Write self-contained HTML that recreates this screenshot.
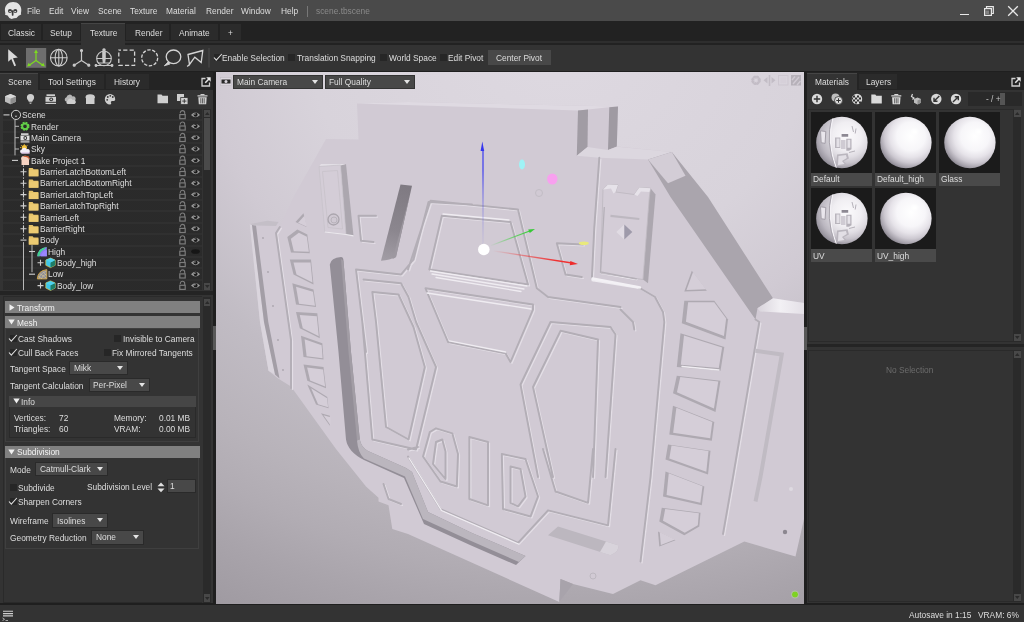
<!DOCTYPE html>
<html><head><meta charset="utf-8"><title>scene.tbscene</title>
<style>
html,body{margin:0;padding:0}
body{width:1024px;height:622px;position:relative;overflow:hidden;background:#1f1f1f;font-family:"Liberation Sans",sans-serif;font-size:9.5px;color:#dedede;line-height:12px}
.a{position:absolute}
.t{position:absolute;white-space:nowrap;transform-origin:0 50%;transform:scaleX(.88);height:12px}
#title{left:0;top:0;width:1024px;height:21px;background:#4a4a4a}
#tabs{left:0;top:21px;width:1024px;height:24px;background:#222}
.tab{position:absolute;top:3px;height:16px;background:#2b2b2b}
.tab.on{background:#333;top:2px;height:22px;border-top:1px solid #454545;box-sizing:border-box}
#toolbar{left:0;top:45px;width:1024px;height:26px;background:#333}
#left{left:0;top:72px;width:213px;height:531px;background:#333}
#view{left:216px;top:72px;width:588px;height:532px;background:#cfc8d2;overflow:hidden}
#right{left:807px;top:72px;width:217px;height:531px;background:#333}
#status{left:0;top:605px;width:1024px;height:17px;background:#333}
.cb{position:absolute;width:7px;height:7px;background:#262626}
.dd{position:absolute;background:#484848;height:12px;box-shadow:0 0 0 1px #2a2a2a}
.dd:after{content:"";position:absolute;right:4px;top:4px;border-left:3px solid transparent;border-right:3px solid transparent;border-top:4.5px solid #e4e4e4}
.hdr{position:absolute;left:5px;width:195px;height:11.5px;background:#808080}
.ptab{position:absolute;top:2px;height:14.5px;background:#2b2b2b}
.ptab.on{background:#333;top:1px;height:17px;border-top:1px solid #454545;box-sizing:border-box}
</style></head><body>
<svg width="0" height="0" style="position:absolute"><defs>
<radialGradient id="gS" cx=".6" cy=".38" r=".66"><stop offset="0" stop-color="#fff"/><stop offset=".42" stop-color="#f7f6f9"/><stop offset=".62" stop-color="#e6e3e9"/><stop offset=".78" stop-color="#cdc9d1"/><stop offset=".9" stop-color="#aba7b0"/><stop offset="1" stop-color="#8a8690"/></radialGradient>
<radialGradient id="gT" cx=".6" cy=".38" r=".66"><stop offset="0" stop-color="#fbfafc"/><stop offset=".42" stop-color="#f0eef2"/><stop offset=".62" stop-color="#dfdce2"/><stop offset=".78" stop-color="#c8c4cc"/><stop offset=".9" stop-color="#a9a5ae"/><stop offset="1" stop-color="#8a8690"/></radialGradient>
<filter id="bl"><feGaussianBlur stdDeviation="1.200"/></filter>
<clipPath id="sphc"><circle cx="30.900" cy="30.500" r="25.700"/></clipPath>
<g id="texd" clip-path="url(#sphc)"><path d="M22.100 4Q15 30 25.400 57L0 57V4Z" fill="#9a96a0" opacity=".28"/><path d="M22.100 5Q15.500 30 25.400 56" fill="none" stroke="#f4f2f6" stroke-width="1.300"/><path d="M20.800 5Q14.200 30 24.100 56" fill="none" stroke="#a9a5ae" stroke-width="1"/>
<path d="M9.500 18.800l5.300.7-.7 11.900-3.900-.7z" fill="#e9e6ec" stroke="#a29ea7" stroke-width="1"/>
<path d="M24 25.400h5.300v10.600H24z" fill="#b9b5bd"/><path d="M25.500 26.500h3v8.500h-3z" fill="#e4e1e7"/>
<path d="M30.600 22.100h6.600v2.700h-6.600z" fill="#8d8993"/>
<path d="M35.300 26.700h5.200v10.600l-2.500 1.500h-2.700z" fill="#b4b0b8"/><path d="M36.500 27.800h2.800v8h-2.800z" fill="#e6e3e9"/>
<path d="M30 28h4.500v9H30z" fill="#cfcbd3"/>
<path d="M26 42.600L36.600 41.200 37.900 46.500 32.600 49.200 36.600 53.100 25.400 54.400Z" fill="#bab6be"/><path d="M27.500 44L35 43 35.800 46 31 49 33.500 52 27 53Z" fill="#e2dfe5"/>
<path d="M41 14l1.500 6M45 16.500l-.8 5M38 40.500l6-1.500" stroke="#b5b1b9" stroke-width="1" fill="none"/>
</g>
</defs></svg>
<!--TITLE-->
<div id="title" class="a">
<svg class="a" style="left:0;top:0" width="24" height="21" viewBox="0 0 24 21"><path d="M13.100 2C8.300 2 4.900 5.500 4.900 9.800C4.900 11.600 5.400 12.600 5.300 13.400L5 14.700L7.600 15.500L9.400 17.900L11.600 19.100L14 18.300L16.500 18L18.600 15.700L21.200 14.500L20.900 13.200C21.100 12.400 21.300 11.400 21.300 9.800C21.300 5.500 17.900 2 13.100 2Z" fill="#e4e4e4"/><circle cx="10" cy="11" r="2.050" fill="#3c3c3c"/><circle cx="15.300" cy="11" r="2.050" fill="#3c3c3c"/><rect x="11.800" y="10.300" width="1.700" height="5.400" rx=".6" fill="#3c3c3c"/><ellipse cx="10.100" cy="11.600" rx="1" ry=".7" fill="#dcdcdc"/><ellipse cx="15.200" cy="11.600" rx="1" ry=".7" fill="#dcdcdc"/></svg>
<span class="t" style="left:26.500px;top:5px">File</span>
<span class="t" style="left:48.500px;top:5px">Edit</span>
<span class="t" style="left:71px;top:5px">View</span>
<span class="t" style="left:97.500px;top:5px">Scene</span>
<span class="t" style="left:129.500px;top:5px">Texture</span>
<span class="t" style="left:166px;top:5px">Material</span>
<span class="t" style="left:205.500px;top:5px">Render</span>
<span class="t" style="left:241px;top:5px">Window</span>
<span class="t" style="left:281px;top:5px">Help</span>
<div class="a" style="left:307px;top:6px;width:1px;height:11px;background:#777"></div>
<span class="t" style="left:316px;top:5px;color:#8a8a8a">scene.tbscene</span>
<div class="a" style="left:960px;top:13.500px;width:9px;height:1.500px;background:#e8e8e8"></div>
<svg class="a" style="left:983px;top:5px" width="12" height="12" viewBox="0 0 12 12"><path d="M3.500 3.500V1.700h6.800v6.800H8.500" fill="none" stroke="#e8e8e8" stroke-width="1.200"/><rect x="1.600" y="3.600" width="6.800" height="6.800" fill="none" stroke="#e8e8e8" stroke-width="1.200"/><rect x="2.500" y="5.500" width="3.500" height="3.500" fill="#e8e8e8" opacity=".35"/></svg>
<svg class="a" style="left:1007px;top:5px" width="12" height="12" viewBox="0 0 12 12"><path d="M1.200 1.200l9.600 9.600M10.800 1.200l-9.600 9.600" stroke="#e8e8e8" stroke-width="1.300"/></svg>
</div>
<!--TABS-->
<div id="tabs" class="a">
<div class="tab" style="left:1px;width:40px"></div>
<div class="tab" style="left:43px;width:37px"></div>
<div class="tab on" style="left:81px;width:44px"></div>
<div class="tab" style="left:126px;width:43px"></div>
<div class="tab" style="left:171px;width:47px"></div>
<div class="tab" style="left:220px;width:21px"></div>
<span class="t" style="left:8px;top:5.500px">Classic</span>
<span class="t" style="left:50px;top:5.500px">Setup</span>
<span class="t" style="left:89.500px;top:5.500px">Texture</span>
<span class="t" style="left:134.500px;top:5.500px">Render</span>
<span class="t" style="left:178.500px;top:5.500px">Animate</span>
<span class="t" style="left:228px;top:5.500px">+</span>
<div class="a" style="left:0;top:20px;width:81px;height:1.500px;background:#2e2e2e"></div>
<div class="a" style="left:125px;top:20px;width:899px;height:1.500px;background:#2e2e2e"></div>
</div>
<!--TOOLBAR-->
<div id="toolbar" class="a">
<svg class="a" style="left:0;top:0" width="215" height="26" viewBox="0 45 215 26">
<path d="M8.200 49.200L17.800 57.600L13 58.200L16 65.600L14.300 66.300L11.300 58.900L8.200 61.800Z" fill="#d9d9d9"/>
<rect x="26" y="48" width="20.200" height="19.800" fill="#6e6e6e"/>
<g stroke="#7ddb20" stroke-width="1.200" fill="#7ddb20"><path d="M36 60.500V52M36 60.500L29.500 65M36 60.500L42.500 65" fill="none"/><path d="M36 49.500l2 3.500h-4z M27 66.500l1.700-3.800 2.300 3.100z M45 66.500l-1.700-3.800-2.300 3.100z" stroke="none"/></g>
<g stroke="#cfcfcf" stroke-width="1.100" fill="none"><circle cx="58.800" cy="57.700" r="8.300"/><ellipse cx="58.800" cy="57.700" rx="3.600" ry="8.300"/><path d="M58.800 49.400v16.600M50.500 57.700h16.600"/></g>
<g stroke="#c8c8c8" stroke-width="1.200" fill="#c8c8c8"><path d="M81.500 60.500V51M81.500 60.500L74.500 65M81.500 60.500L88.500 65" fill="none"/><circle cx="81.500" cy="50.500" r="1" /><circle cx="74.200" cy="65.200" r="1"/><circle cx="88.800" cy="65.200" r="1"/></g>
<g stroke="#c8c8c8" stroke-width="1.100" fill="none"><circle cx="104" cy="58.500" r="7.300"/><path d="M96.700 58.500h14.600M98 63h12M96 65.500h16"/><circle cx="104" cy="50" r="1.200" fill="#c8c8c8"/><path d="M102.200 52h3.600v6l-.6 5h-2.400l-.6-5z" fill="#c8c8c8" stroke="none"/><circle cx="96" cy="65.500" r=".9" fill="#c8c8c8"/><circle cx="112" cy="65.500" r=".9" fill="#c8c8c8"/></g>
<rect x="118.800" y="50.200" width="15.800" height="15.200" fill="none" stroke="#d4d4d4" stroke-width="1.300" stroke-dasharray="4.200 2.200" stroke-dashoffset="2"/>
<circle cx="149.700" cy="57.800" r="8" fill="none" stroke="#d4d4d4" stroke-width="1.300" stroke-dasharray="3.400 1.600"/>
<g fill="none" stroke="#d4d4d4" stroke-width="1.300"><ellipse cx="173.500" cy="56.800" rx="7.300" ry="6.800"/><path d="M168.500 61.500l-4.200 4.300 5.800-1.800" fill="#d4d4d4" stroke-width=".8"/></g>
<path d="M188 54.500L202.800 50.500L201.200 62.500L194.800 57.200L189.500 64.500Z M189.500 64.500l-2.300 2" fill="none" stroke="#d4d4d4" stroke-width="1.300" stroke-linejoin="miter"/>
<rect x="208.500" y="48" width="1" height="19.500" fill="#4c4c4c"/>
</svg>
<div class="cb" style="left:214px;top:9px"></div>
<svg class="a" style="left:212.500px;top:8px" width="10" height="9" viewBox="0 0 10 9"><path d="M1 4.500L3.300 7.200L8.800 1" fill="none" stroke="#dcdcdc" stroke-width="1.100"/></svg>
<span class="t" style="left:222.400px;top:6.900px">Enable Selection</span>
<div class="cb" style="left:288.400px;top:9px"></div>
<span class="t" style="left:297.300px;top:6.900px">Translation Snapping</span>
<div class="cb" style="left:380px;top:9px"></div>
<span class="t" style="left:388.800px;top:6.900px">World Space</span>
<div class="cb" style="left:440px;top:9px"></div>
<span class="t" style="left:448.400px;top:6.900px">Edit Pivot</span>
<div class="a" style="left:488.300px;top:5px;width:62.500px;height:15px;background:#484848"></div>
<span class="t" style="left:495.600px;top:6.900px">Center Pivot</span>
</div>
<!--LEFT-->
<div id="left" class="a">
<div class="a" style="left:0;top:0;width:213px;height:18px;background:#242424"></div>
<div class="ptab on" style="left:0;width:38px"></div><div class="ptab" style="left:40px;width:64px"></div><div class="ptab" style="left:106px;width:43px"></div>
<span class="t" style="left:7.800px;top:3.800px">Scene</span><span class="t" style="left:48px;top:3.800px">Tool Settings</span><span class="t" style="left:114px;top:3.800px">History</span>
<svg class="a" style="left:200.500px;top:4.500px" width="10" height="10" viewBox="0 0 10 10"><path d="M4.500 1.500H1v7.500h7.500V5.500" fill="none" stroke="#d0d0d0" stroke-width="1.300"/><path d="M5.200.3H9.700V4.800L8 3.100 4.800 6.300 3.700 5.200 6.900 2z" fill="#e6e6e6"/></svg>
<svg class="a" style="left:0;top:21px" width="213" height="13" viewBox="0 93 213 13">
<g fill="#cfcfcf">
<path d="M10.500 94L16 96.300V101.700L10.500 104.300 5 101.700V96.300Z" fill="#bdbdbd"/><path d="M10.500 98.600L16 96.300V101.700L10.500 104.300Z" fill="#8e8e8e"/><path d="M10.500 98.600L5 96.300 10.500 94 16 96.300Z" fill="#d8d8d8"/>
<path d="M30.500 94a3.600 3.600 0 0 1 3.600 3.600c0 1.700-1.300 2.600-1.900 4.200h-3.400c-.6-1.600-1.900-2.500-1.900-4.200A3.600 3.600 0 0 1 30.500 94z"/><path d="M29.300 102.400h2.400l-.5 1.600h-1.400z" fill="#a8a8a8"/>
<rect x="45.500" y="96.800" width="10.500" height="5" /><rect x="46.500" y="94.300" width="8.500" height="1.700"/><rect x="45.500" y="102.800" width="10.500" height="1.200"/><circle cx="51.200" cy="99.300" r="1.900" fill="#333"/><circle cx="51.200" cy="99.300" r=".9"/>
<path d="M66 101.500a2.300 2.300 0 0 1 .5-4.300 3.200 3.200 0 0 1 6-.8 2.600 2.600 0 0 1 2.500 4.300z" fill="#b5b5b5"/><path d="M67.500 104a1.900 1.900 0 0 1 .3-3.600 2.600 2.600 0 0 1 4.800-.4 2.100 2.100 0 0 1 2 4z"/>
<path d="M85.500 97.500Q85.500 94.300 90.200 94.300T95 97.500L94.500 98.500V104H86V98.500Z"/>
<path d="M110 94a5.200 5.200 0 1 0 0 10.400c1.400 0 1.400-1 1-1.600-.5-.8.200-1.800 1.200-1.800h1.300c1 0 1.700-.8 1.700-1.800A5.200 5.200 0 0 0 110 94z"/>
<g fill="#333"><circle cx="107.200" cy="99.800" r=".9"/><circle cx="107.800" cy="97" r=".9"/><circle cx="110.300" cy="95.800" r=".9"/><circle cx="112.800" cy="97" r=".9"/></g>
<path d="M157.500 94.500h4l1 1.300h5.500v7.500h-10.500z"/>
<rect x="177" y="94" width="7" height="7" /><rect x="180.700" y="97.600" width="7.300" height="7" stroke="#333" stroke-width=".8"/><path d="M184.300 99v4.200M182.200 101.100h4.200" stroke="#333" stroke-width=".9"/>
<path d="M197.500 95.300h10v1.300h-10z M200.500 94h4v1h-4z M198.300 97.300h8.400l-.5 7h-7.400z"/><path d="M200.800 98.200v5.200M202.500 98.200v5.200M204.200 98.200v5.200" stroke="#333" stroke-width=".7"/>
</g></svg>
<div class="a" id="tree" style="left:3px;top:36.600px;width:199px;height:181.400px;background-color:#2e2e2e;background-image:repeating-linear-gradient(180deg,transparent 0,transparent 10.400px,#353535 10.400px,#353535 11.380px),radial-gradient(circle,#272727 .55px,transparent .9px);background-size:auto,2px 2px;background-position:0 .5px,0 0;overflow:hidden">
</div>
<svg class="a" style="left:0;top:0" width="213" height="220" viewBox="0 0 213 220"><path d="M15 47.9V83.4M15 54.3h4M15 65.7h4M15 77.0h4" stroke="#b8b8b8" stroke-width="1" fill="none"/><path d="M23.500 93.4V168.1" stroke="#b8b8b8" stroke-width="1" stroke-dasharray="1.500 1.500" fill="none"/><path d="M23.500 170.1V218.1M32 173.1V200.2" stroke="#b8b8b8" stroke-width="1" fill="none"/><path d="M3.5 42.9h6" stroke="#d0d0d0" stroke-width="1.100"/><g transform="translate(11 37.9)"><circle cx="5" cy="5" r="4.6" fill="none" stroke="#d0d0d0" stroke-width="1"/><path d="M3.700 5.800h2.600l-1.300 1.600z" fill="#d0d0d0"/></g><g transform="translate(179 38.4)" fill="none" stroke="#7c7c7c"><path d="M1.300 2.800V2.400a2.200 2.200 0 0 1 4.400 0V4" stroke-width="1.100"/><rect x=".8" y="4.200" width="5.400" height="4.100" stroke-width="1.200"/></g><g transform="translate(191 40.1)"><path d="M0 2.800Q4.500-2 9 2.800Q4.500 7.600 0 2.800Z" fill="#9a9a9a"/><circle cx="4.600" cy="2.600" r="2" fill="#1a1a1a"/><circle cx="3.900" cy="1.900" r=".7" fill="#bbb"/></g><g transform="translate(20 49.3)"><circle cx="5" cy="5" r="3.200" fill="none" stroke="#63d048" stroke-width="2.600" stroke-dasharray="1.700 .82"/><circle cx="5" cy="5" r="2.800" fill="none" stroke="#63d048" stroke-width="1.600"/></g><g transform="translate(179 49.8)" fill="none" stroke="#7c7c7c"><path d="M1.300 2.800V2.400a2.200 2.200 0 0 1 4.400 0V4" stroke-width="1.100"/><rect x=".8" y="4.200" width="5.400" height="4.100" stroke-width="1.200"/></g><g transform="translate(191 51.5)"><path d="M0 2.800Q4.500-2 9 2.800Q4.500 7.600 0 2.800Z" fill="#9a9a9a"/><circle cx="4.600" cy="2.600" r="2" fill="#1a1a1a"/><circle cx="3.900" cy="1.900" r=".7" fill="#bbb"/></g><g transform="translate(20 60.7)"><rect x=".5" y="2.800" width="9" height="5" fill="#e2e2e2"/><rect x="1" y=".6" width="7.500" height="1.600" fill="#e2e2e2"/><circle cx="5.300" cy="5.300" r="1.900" fill="#333"/><circle cx="5.300" cy="5.300" r=".9" fill="#e2e2e2"/><rect x=".5" y="8.600" width="9" height="1.200" fill="#e2e2e2"/></g><g transform="translate(179 61.2)" fill="none" stroke="#7c7c7c"><path d="M1.300 2.800V2.400a2.200 2.200 0 0 1 4.400 0V4" stroke-width="1.100"/><rect x=".8" y="4.200" width="5.400" height="4.100" stroke-width="1.200"/></g><g transform="translate(191 62.9)"><path d="M0 2.800Q4.500-2 9 2.800Q4.500 7.600 0 2.800Z" fill="#9a9a9a"/><circle cx="4.600" cy="2.600" r="2" fill="#1a1a1a"/><circle cx="3.900" cy="1.900" r=".7" fill="#bbb"/></g><g transform="translate(20 72.0)"><circle cx="4.300" cy="3.600" r="2.600" fill="#f5c43a"/><path d="M4.300 0v1M1 1l.8.800M7.600 1l-.8.800M0 3.600h1" stroke="#f5c43a" stroke-width=".8"/><path d="M1.500 9.400a2 2 0 0 1 .3-3.900 2.600 2.600 0 0 1 4.800-.3 2.200 2.200 0 0 1 1.900 4.200z" fill="#f3eef6"/><path d="M1 8.600h9v.9H2z" fill="#d5b8e0"/></g><g transform="translate(179 72.5)" fill="none" stroke="#7c7c7c"><path d="M1.300 2.800V2.400a2.200 2.200 0 0 1 4.400 0V4" stroke-width="1.100"/><rect x=".8" y="4.200" width="5.400" height="4.100" stroke-width="1.200"/></g><g transform="translate(191 74.2)"><path d="M0 2.800Q4.500-2 9 2.800Q4.500 7.600 0 2.800Z" fill="#9a9a9a"/><circle cx="4.600" cy="2.600" r="2" fill="#1a1a1a"/><circle cx="3.900" cy="1.900" r=".7" fill="#bbb"/></g><path d="M12.0 88.4h6" stroke="#d0d0d0" stroke-width="1.100"/><g transform="translate(20 83.4)"><path d="M1 3.500Q1 .3 5 .3T9.500 3.500L9 4.500V9.600H1.500V4.500Z" fill="#f6d3c2"/><path d="M2.500 1.500Q5-.5 8.500.8L9.800 3.200 8.500 4.200V2.500Q5 1 2.500 1.500Z" fill="#c4552d"/></g><g transform="translate(179 83.9)" fill="none" stroke="#7c7c7c"><path d="M1.300 2.800V2.400a2.200 2.200 0 0 1 4.400 0V4" stroke-width="1.100"/><rect x=".8" y="4.200" width="5.400" height="4.100" stroke-width="1.200"/></g><g transform="translate(191 85.6)"><path d="M0 2.800Q4.500-2 9 2.800Q4.500 7.600 0 2.800Z" fill="#9a9a9a"/><circle cx="4.600" cy="2.600" r="2" fill="#1a1a1a"/><circle cx="3.900" cy="1.900" r=".7" fill="#bbb"/></g><path d="M20.5 99.8h6M23.5 96.8v6" stroke="#d0d0d0" stroke-width="1.100"/><g transform="translate(28.5 94.8)"><path d="M.3 1.200h3.800l1 1.300h4.800v7H.3z" fill="#e5c268"/><path d="M.3 3.300h9.600v6.200H.3z" fill="#ecca72"/></g><g transform="translate(179 95.3)" fill="none" stroke="#7c7c7c"><path d="M1.300 2.800V2.400a2.200 2.200 0 0 1 4.400 0V4" stroke-width="1.100"/><rect x=".8" y="4.200" width="5.400" height="4.100" stroke-width="1.200"/></g><g transform="translate(191 97.0)"><path d="M0 2.800Q4.500-2 9 2.800Q4.500 7.600 0 2.800Z" fill="#9a9a9a"/><circle cx="4.600" cy="2.600" r="2" fill="#1a1a1a"/><circle cx="3.900" cy="1.900" r=".7" fill="#bbb"/></g><path d="M20.5 111.2h6M23.5 108.2v6" stroke="#d0d0d0" stroke-width="1.100"/><g transform="translate(28.5 106.2)"><path d="M.3 1.200h3.800l1 1.300h4.800v7H.3z" fill="#e5c268"/><path d="M.3 3.300h9.600v6.200H.3z" fill="#ecca72"/></g><g transform="translate(179 106.7)" fill="none" stroke="#7c7c7c"><path d="M1.300 2.800V2.400a2.200 2.200 0 0 1 4.400 0V4" stroke-width="1.100"/><rect x=".8" y="4.200" width="5.400" height="4.100" stroke-width="1.200"/></g><g transform="translate(191 108.4)"><path d="M0 2.800Q4.500-2 9 2.800Q4.500 7.600 0 2.800Z" fill="#9a9a9a"/><circle cx="4.600" cy="2.600" r="2" fill="#1a1a1a"/><circle cx="3.900" cy="1.900" r=".7" fill="#bbb"/></g><path d="M20.5 122.6h6M23.5 119.6v6" stroke="#d0d0d0" stroke-width="1.100"/><g transform="translate(28.5 117.6)"><path d="M.3 1.200h3.800l1 1.300h4.800v7H.3z" fill="#e5c268"/><path d="M.3 3.300h9.600v6.200H.3z" fill="#ecca72"/></g><g transform="translate(179 118.1)" fill="none" stroke="#7c7c7c"><path d="M1.300 2.800V2.400a2.200 2.200 0 0 1 4.400 0V4" stroke-width="1.100"/><rect x=".8" y="4.200" width="5.400" height="4.100" stroke-width="1.200"/></g><g transform="translate(191 119.8)"><path d="M0 2.800Q4.500-2 9 2.800Q4.500 7.600 0 2.800Z" fill="#9a9a9a"/><circle cx="4.600" cy="2.600" r="2" fill="#1a1a1a"/><circle cx="3.900" cy="1.900" r=".7" fill="#bbb"/></g><path d="M20.5 133.9h6M23.5 130.9v6" stroke="#d0d0d0" stroke-width="1.100"/><g transform="translate(28.5 128.9)"><path d="M.3 1.200h3.800l1 1.300h4.800v7H.3z" fill="#e5c268"/><path d="M.3 3.300h9.600v6.200H.3z" fill="#ecca72"/></g><g transform="translate(179 129.4)" fill="none" stroke="#7c7c7c"><path d="M1.300 2.800V2.400a2.200 2.200 0 0 1 4.400 0V4" stroke-width="1.100"/><rect x=".8" y="4.200" width="5.400" height="4.100" stroke-width="1.200"/></g><g transform="translate(191 131.1)"><path d="M0 2.800Q4.500-2 9 2.800Q4.500 7.600 0 2.800Z" fill="#9a9a9a"/><circle cx="4.600" cy="2.600" r="2" fill="#1a1a1a"/><circle cx="3.900" cy="1.900" r=".7" fill="#bbb"/></g><path d="M20.5 145.3h6M23.5 142.3v6" stroke="#d0d0d0" stroke-width="1.100"/><g transform="translate(28.5 140.3)"><path d="M.3 1.200h3.800l1 1.300h4.800v7H.3z" fill="#e5c268"/><path d="M.3 3.300h9.600v6.200H.3z" fill="#ecca72"/></g><g transform="translate(179 140.8)" fill="none" stroke="#7c7c7c"><path d="M1.300 2.800V2.400a2.200 2.200 0 0 1 4.400 0V4" stroke-width="1.100"/><rect x=".8" y="4.200" width="5.400" height="4.100" stroke-width="1.200"/></g><g transform="translate(191 142.5)"><path d="M0 2.800Q4.500-2 9 2.800Q4.500 7.600 0 2.800Z" fill="#9a9a9a"/><circle cx="4.600" cy="2.600" r="2" fill="#1a1a1a"/><circle cx="3.900" cy="1.900" r=".7" fill="#bbb"/></g><path d="M20.5 156.7h6M23.5 153.7v6" stroke="#d0d0d0" stroke-width="1.100"/><g transform="translate(28.5 151.7)"><path d="M.3 1.200h3.800l1 1.300h4.800v7H.3z" fill="#e5c268"/><path d="M.3 3.300h9.600v6.200H.3z" fill="#ecca72"/></g><g transform="translate(179 152.2)" fill="none" stroke="#7c7c7c"><path d="M1.300 2.800V2.400a2.200 2.200 0 0 1 4.400 0V4" stroke-width="1.100"/><rect x=".8" y="4.200" width="5.400" height="4.100" stroke-width="1.200"/></g><g transform="translate(191 153.9)"><path d="M0 2.800Q4.500-2 9 2.800Q4.500 7.600 0 2.800Z" fill="#9a9a9a"/><circle cx="4.600" cy="2.600" r="2" fill="#1a1a1a"/><circle cx="3.900" cy="1.900" r=".7" fill="#bbb"/></g><path d="M20.5 168.1h6" stroke="#d0d0d0" stroke-width="1.100"/><g transform="translate(28.5 163.1)"><path d="M.3 1.200h3.800l1 1.300h4.800v7H.3z" fill="#e5c268"/><path d="M.3 3.300h9.600v6.200H.3z" fill="#ecca72"/></g><g transform="translate(179 163.6)" fill="none" stroke="#7c7c7c"><path d="M1.300 2.800V2.400a2.200 2.200 0 0 1 4.400 0V4" stroke-width="1.100"/><rect x=".8" y="4.200" width="5.400" height="4.100" stroke-width="1.200"/></g><g transform="translate(191 165.3)"><path d="M0 2.800Q4.500-2 9 2.800Q4.500 7.600 0 2.800Z" fill="#9a9a9a"/><circle cx="4.600" cy="2.600" r="2" fill="#1a1a1a"/><circle cx="3.900" cy="1.900" r=".7" fill="#bbb"/></g><path d="M29.0 179.5h6" stroke="#d0d0d0" stroke-width="1.100"/><g transform="translate(37 174.5)"><path d="M.3 9.700Q.8 1.500 9.800.4V9.700Z" fill="#8c7cf0"/><path d="M.3 9.700Q.8 1.500 9.800.4L7 3Q3 5 2.500 9.700Z" fill="#3fd28c"/><path d="M4 9.700Q4.500 5 9.800 3.500V9.700Z" fill="#9a86ff"/></g><g transform="translate(179 175.0)" fill="none" stroke="#7c7c7c"><path d="M1.300 2.800V2.400a2.200 2.200 0 0 1 4.400 0V4" stroke-width="1.100"/><rect x=".8" y="4.200" width="5.400" height="4.100" stroke-width="1.200"/></g><ellipse cx="195.500" cy="179.5" rx="4.300" ry="2.300" fill="#161616"/><path d="M37.5 190.8h6M40.5 187.8v6" stroke="#d0d0d0" stroke-width="1.100"/><g transform="translate(45.5 185.8)"><path d="M5 .3L9.700 2.300V7.500L5 9.800.3 7.500V2.300Z" fill="#3ec6e8" stroke="#e4c84a" stroke-width=".7"/><path d="M5 4.600L9.700 2.300V7.500L5 9.800Z" fill="#1d7d68"/><path d="M5 4.600L.3 2.300 5 .3 9.700 2.300Z" fill="#4fd2ee"/></g><g transform="translate(179 186.3)" fill="none" stroke="#7c7c7c"><path d="M1.300 2.800V2.400a2.200 2.200 0 0 1 4.400 0V4" stroke-width="1.100"/><rect x=".8" y="4.200" width="5.400" height="4.100" stroke-width="1.200"/></g><g transform="translate(191 188.0)"><path d="M0 2.800Q4.500-2 9 2.800Q4.500 7.600 0 2.800Z" fill="#9a9a9a"/><circle cx="4.600" cy="2.600" r="2" fill="#1a1a1a"/><circle cx="3.900" cy="1.900" r=".7" fill="#bbb"/></g><path d="M29.0 202.2h6" stroke="#d0d0d0" stroke-width="1.100"/><g transform="translate(37 197.2)"><path d="M.3 9.700Q.8 1.500 9.800.4V9.700Z" fill="#8d8d9a" stroke="#d8a840" stroke-width=".9"/><path d="M2 9.500Q3 4 9.500 2M4.500 9.500Q5 6 9.500 5M3 4.500L9.500 9M6 2.500L9.500 6.500M1.200 7L5 9.600" stroke="#d8c890" stroke-width=".6" fill="none"/></g><g transform="translate(179 197.7)" fill="none" stroke="#7c7c7c"><path d="M1.300 2.800V2.400a2.200 2.200 0 0 1 4.400 0V4" stroke-width="1.100"/><rect x=".8" y="4.200" width="5.400" height="4.100" stroke-width="1.200"/></g><g transform="translate(191 199.4)"><path d="M0 2.800Q4.500-2 9 2.800Q4.500 7.600 0 2.800Z" fill="#9a9a9a"/><circle cx="4.600" cy="2.600" r="2" fill="#1a1a1a"/><circle cx="3.900" cy="1.900" r=".7" fill="#bbb"/></g><path d="M37.5 213.6h6M40.5 210.6v6" stroke="#d0d0d0" stroke-width="1.100"/><g transform="translate(45.5 208.6)"><path d="M5 .3L9.700 2.300V7.500L5 9.800.3 7.500V2.300Z" fill="#3ec6e8" stroke="#e4c84a" stroke-width=".7"/><path d="M5 4.600L9.700 2.300V7.500L5 9.800Z" fill="#1d7d68"/><path d="M5 4.600L.3 2.300 5 .3 9.700 2.300Z" fill="#4fd2ee"/></g><g transform="translate(179 209.1)" fill="none" stroke="#7c7c7c"><path d="M1.300 2.800V2.400a2.200 2.200 0 0 1 4.400 0V4" stroke-width="1.100"/><rect x=".8" y="4.200" width="5.400" height="4.100" stroke-width="1.200"/></g><g transform="translate(191 210.8)"><path d="M0 2.800Q4.500-2 9 2.800Q4.500 7.600 0 2.800Z" fill="#9a9a9a"/><circle cx="4.600" cy="2.600" r="2" fill="#1a1a1a"/><circle cx="3.900" cy="1.900" r=".7" fill="#bbb"/></g></svg>
<span class="t" style="left:22px;top:37.1px">Scene</span>
<span class="t" style="left:30.5px;top:48.5px">Render</span>
<span class="t" style="left:30.5px;top:59.9px">Main Camera</span>
<span class="t" style="left:30.5px;top:71.2px">Sky</span>
<span class="t" style="left:30.5px;top:82.6px">Bake Project 1</span>
<span class="t" style="left:39.5px;top:94.0px">BarrierLatchBottomLeft</span>
<span class="t" style="left:39.5px;top:105.4px">BarrierLatchBottomRight</span>
<span class="t" style="left:39.5px;top:116.8px">BarrierLatchTopLeft</span>
<span class="t" style="left:39.5px;top:128.1px">BarrierLatchTopRight</span>
<span class="t" style="left:39.5px;top:139.5px">BarrierLeft</span>
<span class="t" style="left:39.5px;top:150.9px">BarrierRight</span>
<span class="t" style="left:39.5px;top:162.3px">Body</span>
<span class="t" style="left:48px;top:173.7px">High</span>
<span class="t" style="left:56.5px;top:185.0px">Body_high</span>
<span class="t" style="left:48px;top:196.4px">Low</span>
<span class="t" style="left:56.5px;top:207.8px">Body_low</span>
<div class="a" style="left:203px;top:36.600px;width:7.500px;height:181.400px;background:#2a2a2a"></div>
<div class="a" style="left:203.500px;top:45.500px;width:6.500px;height:52px;background:#4a4a4a"></div>
<div class="a" style="left:203.500px;top:37.600px;width:6.500px;height:7px;background:#484848"></div><div class="a" style="left:203.500px;top:210.500px;width:6.500px;height:7px;background:#484848"></div><svg class="a" style="left:203.500px;top:37.600px" width="7" height="7" viewBox="0 0 7 7"><path d="M1 5L3.300 2 5.600 5z" fill="#2a2a2a"/></svg><svg class="a" style="left:203.500px;top:210.500px" width="7" height="7" viewBox="0 0 7 7"><path d="M1 2L3.300 5 5.600 2z" fill="#2a2a2a"/></svg>
<!--PROPS-->
<div class="a" style="left:0;top:219.300px;width:213px;height:3.500px;background:#242424"></div>
<div class="a" style="left:2.500px;top:224px;width:1px;height:307px;background:#2a2a2a"></div>
<div class="a" style="left:2.500px;top:224px;width:199px;height:1px;background:#2a2a2a"></div>
<div class="hdr" style="top:229.3px;height:11.7px"></div>
<svg class="a" style="left:8.500px;top:231.5px" width="6" height="7" viewBox="0 0 6 7"><path d="M.5.3v6.400L5.500 3.500z" fill="#f0f0f0"/></svg>
<span class="t" style="left:17px;top:229.5px;color:#f2f2f2">Transform</span>
<div class="hdr" style="top:244.3px;height:11.7px"></div>
<svg class="a" style="left:8px;top:246.8px" width="7" height="6" viewBox="0 0 7 6"><path d="M.3.5h6.400L3.500 5.500z" fill="#f0f0f0"/></svg>
<span class="t" style="left:17px;top:244.5px;color:#f2f2f2">Mesh</span>
<div class="a" style="left:5px;top:256px;width:194px;height:114px;border:1px solid #3f3f3f;box-sizing:border-box"></div>
<div class="cb" style="left:9.5px;top:263.0px"></div>
<svg class="a" style="left:8.0px;top:261.7px" width="10" height="9" viewBox="0 0 10 9"><path d="M1 4.500L3.300 7.200L8.800 1" fill="none" stroke="#dcdcdc" stroke-width="1.100"/></svg>
<span class="t" style="left:18px;top:260.8px">Cast Shadows</span>
<div class="cb" style="left:114px;top:263.0px"></div>
<span class="t" style="left:122.5px;top:260.8px">Invisible to Camera</span>
<div class="cb" style="left:9.5px;top:277.0px"></div>
<svg class="a" style="left:8.0px;top:275.7px" width="10" height="9" viewBox="0 0 10 9"><path d="M1 4.500L3.300 7.200L8.800 1" fill="none" stroke="#dcdcdc" stroke-width="1.100"/></svg>
<span class="t" style="left:18px;top:274.8px">Cull Back Faces</span>
<div class="cb" style="left:103.5px;top:277.0px"></div>
<span class="t" style="left:112px;top:274.8px">Fix Mirrored Tangents</span>
<span class="t" style="left:10px;top:290.8px">Tangent Space</span>
<div class="dd" style="left:70px;top:290.3px;width:57px;height:12.2px"></div>
<span class="t" style="left:73.5px;top:290.4px">Mikk</span>
<span class="t" style="left:10px;top:307.6px">Tangent Calculation</span>
<div class="dd" style="left:89.5px;top:307.4px;width:59px;height:12px"></div>
<span class="t" style="left:92.5px;top:307.4px">Per-Pixel</span>
<div class="a" style="left:9px;top:323.6px;width:186.500px;height:11.500px;background:#464646"></div>
<svg class="a" style="left:12.500px;top:326.1px" width="7" height="6" viewBox="0 0 7 6"><path d="M.3.500h6.400L3.500 5.500z" fill="#f0f0f0"/></svg>
<span class="t" style="left:20.5px;top:323.8px">Info</span>
<div class="a" style="left:9px;top:335px;width:186.500px;height:31px;border:1px solid #2a2a2a;border-top:none;box-sizing:border-box"></div>
<span class="t" style="left:14px;top:339.5px">Vertices:</span>
<span class="t" style="left:59px;top:339.5px">72</span>
<span class="t" style="left:114px;top:339.5px">Memory:</span>
<span class="t" style="left:159px;top:339.5px">0.01 MB</span>
<span class="t" style="left:14px;top:350.8px">Triangles:</span>
<span class="t" style="left:59px;top:350.8px">60</span>
<span class="t" style="left:114px;top:350.8px">VRAM:</span>
<span class="t" style="left:159px;top:350.8px">0.00 MB</span>
<div class="hdr" style="top:374.2px;height:11.5px"></div>
<svg class="a" style="left:8px;top:376.7px" width="7" height="6" viewBox="0 0 7 6"><path d="M.3.5h6.400L3.500 5.500z" fill="#f0f0f0"/></svg>
<span class="t" style="left:17px;top:374.2px;color:#f2f2f2">Subdivision</span>
<div class="a" style="left:5px;top:385.5px;width:194px;height:91px;border:1px solid #3f3f3f;border-top:none;box-sizing:border-box"></div>
<span class="t" style="left:10px;top:391.6px">Mode</span>
<div class="dd" style="left:36px;top:391.0px;width:70.5px;height:12px"></div>
<span class="t" style="left:40px;top:391.0px">Catmull-Clark</span>
<div class="cb" style="left:9.5px;top:411.8px"></div>
<span class="t" style="left:18px;top:410.0px">Subdivide</span>
<span class="t" style="left:87px;top:409.0px">Subdivision Level</span>
<svg class="a" style="left:156.500px;top:409.5px" width="8" height="11" viewBox="0 0 8 11"><path d="M.5 4.300L4 .5 7.500 4.300zM.5 6.500L4 10.300 7.500 6.500z" fill="#e0e0e0"/></svg>
<div class="a" style="left:167.500px;top:408px;width:27px;height:12.300px;background:#484848;box-shadow:0 0 0 1px #2a2a2a"></div>
<span class="t" style="left:170px;top:408.3px">1</span>
<div class="cb" style="left:9.5px;top:426.0px"></div>
<svg class="a" style="left:8.0px;top:424.7px" width="10" height="9" viewBox="0 0 10 9"><path d="M1 4.500L3.300 7.200L8.800 1" fill="none" stroke="#dcdcdc" stroke-width="1.100"/></svg>
<span class="t" style="left:18px;top:424.0px">Sharpen Corners</span>
<span class="t" style="left:9.5px;top:443.0px">Wireframe</span>
<div class="dd" style="left:53px;top:442.3px;width:53.5px;height:12.5px"></div>
<span class="t" style="left:56.5px;top:442.5px">Isolines</span>
<span class="t" style="left:9.5px;top:460.0px">Geometry Reduction</span>
<div class="dd" style="left:92px;top:459.0px;width:51.3px;height:12.8px"></div>
<span class="t" style="left:95.5px;top:459.4px">None</span>
<div class="a" style="left:203px;top:225px;width:7.500px;height:306px;background:#2a2a2a"></div>
<div class="a" style="left:203.500px;top:226.5px;width:6.500px;height:7px;background:#484848"></div><div class="a" style="left:203.500px;top:522px;width:6.500px;height:7.500px;background:#484848"></div>
<svg class="a" style="left:203.500px;top:226.5px" width="7" height="7" viewBox="0 0 7 7"><path d="M1 5L3.300 2 5.600 5z" fill="#2a2a2a"/></svg><svg class="a" style="left:203.500px;top:522.5px" width="7" height="7" viewBox="0 0 7 7"><path d="M1 2L3.300 5 5.600 2z" fill="#2a2a2a"/></svg>
<div class="a" style="left:2.500px;top:529.500px;width:199px;height:1px;background:#2a2a2a"></div>
<!--/PROPS-->
</div>
<!--VIEW-->
<div id="view" class="a">
<svg class="a" style="left:0;top:0" width="588" height="532" viewBox="216 72 588 532">
<defs>
<radialGradient id="vbg" gradientUnits="userSpaceOnUse" cx="560" cy="40" r="640" gradientTransform="translate(560 40) scale(1.15 1) translate(-560 -40)">
<stop offset="0" stop-color="#ded9e1"/><stop offset=".34" stop-color="#d8d3db"/><stop offset=".48" stop-color="#d0cad3"/><stop offset=".62" stop-color="#c1bcc4"/><stop offset=".75" stop-color="#b8b3ba"/><stop offset=".83" stop-color="#b1acb3"/><stop offset=".9" stop-color="#a9a4ab"/><stop offset="1" stop-color="#9f9aa1"/></radialGradient>
<linearGradient id="gGreen" gradientUnits="userSpaceOnUse" x1="490" y1="246" x2="535" y2="229"><stop offset="0" stop-color="#40d040" stop-opacity="0"/><stop offset=".8" stop-color="#40d040"/></linearGradient>
<linearGradient id="gRed" gradientUnits="userSpaceOnUse" x1="493" y1="251" x2="578" y2="264"><stop offset="0" stop-color="#f03030" stop-opacity="0"/><stop offset=".75" stop-color="#f03030"/></linearGradient>
<linearGradient id="gBlue" gradientUnits="userSpaceOnUse" x1="483" y1="246" x2="483" y2="142"><stop offset="0" stop-color="#3a3af0" stop-opacity=".05"/><stop offset=".1" stop-color="#3a3af0" stop-opacity=".1"/><stop offset=".35" stop-color="#3a3af0" stop-opacity=".3"/><stop offset=".54" stop-color="#3a3af0" stop-opacity=".6"/><stop offset=".73" stop-color="#3a3af0"/></linearGradient>
<linearGradient id="gSlabTop" gradientUnits="userSpaceOnUse" x1="757" y1="305" x2="804" y2="305"><stop offset="0" stop-color="#d8d3db"/><stop offset=".5" stop-color="#f2f0f4"/><stop offset="1" stop-color="#e4e0e7"/></linearGradient>
<filter id="gb" x="-5%" y="-5%" width="110%" height="110%"><feGaussianBlur stdDeviation=".45"/></filter>
<linearGradient id="gSlot" gradientUnits="userSpaceOnUse" x1="405" y1="185" x2="388" y2="260"><stop offset="0" stop-color="#7f7a82"/><stop offset=".6" stop-color="#8b868e"/><stop offset="1" stop-color="#a19ca4"/></linearGradient>
</defs>
<rect x="216" y="72" width="588" height="532" fill="url(#vbg)"/>
<!--SIL-->
<path id="sil" fill="#d1cad4" d="M357 103.500L408 102L618 106.500L616.800 146.500L671.800 152L723 227L773 298.300L804 303V519L795.500 556.500L744.300 541.500L655.500 585.300L640.500 580.300L613 594L573 584L560.500 579L559.300 602L408 534L392.300 529L388.500 505.300L378.500 501.500V497.800L366 486.500L336 449L291 386.500L277.300 378L268.500 370.800L260 322L249.800 224L267.300 220.800L278.500 222L279.800 227L293.500 197L326 139L358.500 139.500Z"/>
<!--FACES-->
<g id="faces">
<!-- top plate top sliver -->
<path d="M357 103.500L408 102L618 106.500L609 107.300L588 109.600L578 110.500Z" fill="#dfdae2"/>
<!-- notch dark faces -->
<path d="M578 110.500L588 109.600L587.500 147L576.800 155.800Z" fill="#a19ca4"/>
<path d="M609.300 107.200L618 106.500L616.800 146.500L608 150Z" fill="#9f9aa2"/>
<!-- ledge top face -->
<path d="M576.800 155.800L587.500 147L608 150L616.800 146.800L671.800 152L648 159.500L599.300 157.800Z" fill="#dcd7df"/>
<!-- right dark side -->
<path d="M648 159.500L671.800 152L708 197L773 298.300L757.500 308.300L755.500 319.500L670.500 197Z" fill="#aaa5ad"/>
<path d="M648 159.500L671.800 152L685.500 175.800L668 183.300Z" fill="#d3cdd6"/>
<!-- right slab top face -->
<path d="M757.500 308.300L773 298.300L804 303V314L760 311.500Z" fill="url(#gSlabTop)"/>
<!-- left slab groove + left light edge -->
<path d="M249.800 224L252 225L264 322L275 374.500L268.500 370.800L260 322Z" fill="#dad5dd"/>
<path d="M252 225L256 225.500L268.300 322L279.500 378.500L275 374.500L264 322Z" fill="#a39ea6"/>
<path d="M249.800 224L267.300 220.800L278.500 222L276 226L256 225.500L252 225Z" fill="#c4bfc7"/>
<!-- tall dark slot + channel -->
<path d="M329.800 264.500Q331 257.500 341 257Q343.500 257 343.500 261L351 352L359.800 439.500Q361 447 368 451L406 468L412 472L428 512L472 533L525.500 556L516 565L470 545L424 524L404 478L364 460Q348 452 346 439.500L338.500 352Z" fill="#938e97"/>
<path d="M341 259L343.500 261L351 352L359.800 439.500L357 440.500L348.500 352Z" fill="#a29da5"/>
<path d="M357 440.500L359.800 439.500Q361 447 368 451L406 468L412 472L428 512L472 533L525.500 556L519 562L470 540.500L423 519L405 476.500L364 458.500Q358 453 357 440.500Z" fill="#bbb6be"/>
<!-- parallelogram slot -->
<path d="M400.500 184.500L412 185.800L396 257Q390 260 381 260.800Z" fill="url(#gSlot)"/>
<path d="M409.500 197L411 190L396 257Q394 258.500 392.500 259Z" fill="#9d98a0"/>
<!-- vent slot bottom -->
<path d="M548 535.300L558 526.500L618 545.300Q620 551 610.500 555.300Z" fill="#bcb7bf"/>
<path d="M606 541.500L618 545.300Q620 551 610.500 555.300L600 552Z" fill="#d8d3db"/>
<!-- bottom notch dark -->
<path d="M560.500 579L573 584L559.300 602Z" fill="#a8a3ab"/>
</g>
<!--GROOVES-->
<g fill="none" stroke-linejoin="round" stroke-linecap="round">
<g stroke="none"><path fill="#aea9b1" d="M295.5 222L303.5 213.3L306.5 227Z"/><path fill="#d5ced8" d="M298.067 222.653L304.467 215.693L306.867 226.653Z"/><path fill="#aea9b1" d="M287.3 237L297.3 229.5L307.3 234.5L309.8 253.3L291 252.5Z"/><path fill="#d5ced8" d="M290.848 238.772L298.848 232.772L306.848 236.772L308.848 251.812L293.808 251.172Z"/><path fill="#aea9b1" d="M289.8 259.5L311 259.5L313.5 284.5L293.5 274.5Z"/><path fill="#d5ced8" d="M293.53 262.4L310.49 262.4L312.49 282.4L296.49 274.4Z"/><path fill="#aea9b1" d="M292.3 283.3L313.5 289.5L316 307L296 304.5Z"/><path fill="#d5ced8" d="M296.03 286.755L312.99 291.715L314.99 305.715L298.99 303.715Z"/><path fill="#aea9b1" d="M296 312L317.3 313.3L319.8 338.3L299.8 328.3Z"/><path fill="#d5ced8" d="M299.745 315.095L316.785 316.135L318.785 336.135L302.785 328.135Z"/><path fill="#aea9b1" d="M301 335.8L322.3 343.3L323.5 359.5L303.5 357Z"/><path fill="#d5ced8" d="M304.615 339.32L321.655 345.32L322.615 358.28L306.615 356.28Z"/><path fill="#aea9b1" d="M303.5 364.5L323.5 367L326 388.3L307.3 380.8Z"/><path fill="#d5ced8" d="M307.115 367.53L323.115 369.53L325.115 386.57L310.155 380.57Z"/><path fill="#aea9b1" d="M307.3 384.5L327.3 397L328.5 408.3L316 404.5Z"/><path fill="#d5ced8" d="M311.095 388.215L327.095 398.215L328.055 407.255L318.055 404.215Z"/><path fill="#aea9b1" d="M321 413.3L329.8 415.8L329.8 425.8Z"/><path fill="#d5ced8" d="M323.473 415.2L330.513 417.2L330.513 425.2Z"/><path fill="#aea9b1" d="M691.8 270.8L706.8 290.8L684.3 291.5Z"/><path fill="#d5ced8" d="M693.025 271.964L706.075 289.364L686.5 289.973Z"/><path fill="#aea9b1" d="M684.3 300.8L714.3 300.8L728 319.5L725.5 339.5L681.8 323.3Z"/><path fill="#d5ced8" d="M688.122 302.277L714.222 302.277L726.141 318.546L723.966 335.946L685.947 321.852Z"/><path fill="#aea9b1" d="M680.5 333.3L724.3 347L720.5 370.8L676.8 367Z"/><path fill="#d5ced8" d="M684.003 335.459L722.109 347.378L718.803 368.084L680.784 364.778Z"/><path fill="#aea9b1" d="M676.8 375.8L720.5 380.8L715.5 412L673 393.3Z"/><path fill="#d5ced8" d="M680.254 377.108L718.274 381.458L713.923 408.602L676.948 392.333Z"/><path fill="#aea9b1" d="M673 405.8L714.3 422L711.8 440.8L669.3 434.5Z"/><path fill="#d5ced8" d="M676.383 407.797L712.314 421.891L710.139 438.247L673.164 432.766Z"/><path fill="#aea9b1" d="M668 444.5L710.5 450.8L708 474.5L665.5 459.5Z"/><path fill="#d5ced8" d="M671.5 445.567L708.475 451.048L706.3 471.667L669.325 458.617Z"/><path fill="#aea9b1" d="M665.5 471.5L704.3 486.5L701.8 505.3L663 496.5Z"/><path fill="#d5ced8" d="M668.76 473.298L702.515 486.349L700.34 502.704L666.584 495.048Z"/><path fill="#aea9b1" d="M661.8 507.8L700.5 512.8L699.3 526.5L684.3 535.3L659.3 521.5Z"/><path fill="#d5ced8" d="M665.201 508.887L698.87 513.237L697.826 525.156L684.776 532.812L663.026 520.806Z"/><path fill="#aea9b1" d="M658 531.5L675.5 540.3L659.3 546.5Z"/><path fill="#d5ced8" d="M659.715 531.931L674.94 539.587L660.846 544.981Z"/></g>
<path stroke="#e6e2e9" stroke-width="1.300" opacity=".85" transform="translate(1.500 1.300)" d="M366 352L356 269.5L401 274.5L413.5 259.5L428.5 202L472 204.5M363.5 279.5L401 283.3L408.5 297M362.3 322L372.3 439.5L416 449.5L436 367L416 322L408.5 297M356 269.5L362.3 322M372.3 292L398.5 294.5L413.5 327L424.8 367L408.5 439.5L386 427L376 322L372.3 292M408 269.5L430.5 200.8L518 209.5L536.8 288.3M441.8 215.8L510.5 222L528 284.5L429.3 269.5L441.8 215.8M425.5 288.3L533 304.5L533 309.5L510.5 362L505.5 353.3L448 342L425.5 288.3M553 477L533 387L560.5 330.8L598 339.5L593 477M538 477L520.5 384.5L550.5 322L610.5 327L615.5 334.5L605.5 477M536.8 288.3L548 297L620.5 307M638 287L655 297L663 312L664.3 322L650.5 477L640.5 561.5M620.5 309.5L633 322L634.3 329.5M755.5 319.5L759.3 322L733 477L723 534M408 456.5L440.5 509L518 542.8L548 510.3L608 525.3L615.5 449M543 449L555.5 491.5L588 502.8L593 449M429.8 432L436 428.3L452.3 433.3L458 454L456.8 486.5L440.5 481.5L423 456.5L429.8 432M436 442L442.3 439.5L445.5 451.5L445.5 479L433 464L436 442M469.3 437L488 442L488 505.3L469.3 499L469.3 437M501.8 454L525.5 459L538 496.5L530.5 516.5L503 509L501.8 454M510.5 466.5L520.5 469L525.5 496.5L518 506.5L510.5 502.8L510.5 466.5M418 447L408 449.5M279.8 227L276 233L291 340L291 388M383.5 484L388.5 499L401 504M599.3 157.8L594.3 227L591.8 279.5M376 215.8L358.5 215.8L361 240.8L373.5 242M583 244.5L556.8 243.3L565.5 274.5L581.8 277"/>
<path stroke="#b3aeb6" stroke-width="1.900" filter="url(#gb)" d="M366 352L356 269.5L401 274.5L413.5 259.5L428.5 202L472 204.5M363.5 279.5L401 283.3L408.5 297M362.3 322L372.3 439.5L416 449.5L436 367L416 322L408.5 297M356 269.5L362.3 322M372.3 292L398.5 294.5L413.5 327L424.8 367L408.5 439.5L386 427L376 322L372.3 292M408 269.5L430.5 200.8L518 209.5L536.8 288.3M441.8 215.8L510.5 222L528 284.5L429.3 269.5L441.8 215.8M425.5 288.3L533 304.5L533 309.5L510.5 362L505.5 353.3L448 342L425.5 288.3M553 477L533 387L560.5 330.8L598 339.5L593 477M538 477L520.5 384.5L550.5 322L610.5 327L615.5 334.5L605.5 477M536.8 288.3L548 297L620.5 307M638 287L655 297L663 312L664.3 322L650.5 477L640.5 561.5M620.5 309.5L633 322L634.3 329.5M755.5 319.5L759.3 322L733 477L723 534M408 456.5L440.5 509L518 542.8L548 510.3L608 525.3L615.5 449M543 449L555.5 491.5L588 502.8L593 449M429.8 432L436 428.3L452.3 433.3L458 454L456.8 486.5L440.5 481.5L423 456.5L429.8 432M436 442L442.3 439.5L445.5 451.5L445.5 479L433 464L436 442M469.3 437L488 442L488 505.3L469.3 499L469.3 437M501.8 454L525.5 459L538 496.5L530.5 516.5L503 509L501.8 454M510.5 466.5L520.5 469L525.5 496.5L518 506.5L510.5 502.8L510.5 466.5M418 447L408 449.5M279.8 227L276 233L291 340L291 388M383.5 484L388.5 499L401 504M599.3 157.8L594.3 227L591.8 279.5M376 215.8L358.5 215.8L361 240.8L373.5 242M583 244.5L556.8 243.3L565.5 274.5L581.8 277"/>
<path stroke="#efecf1" stroke-width="1.300" d="M449.3 340.8L505.5 352M430.5 271L527 286M432 274L524 289M436 277.5L521 291.5M427 293L531 309M443 214L509 220M591.8 279.5L638 287M592 280.5L638 288M600.5 273.3L636.8 279.5M682 366.5L719 370M409 458L441.5 510.5L518.5 544"/>
</g>
<g>
<path d="M340.500 165L346 164L353.500 235.800L346 234.500Z" fill="#aca7af"/>
<path d="M319 166.500L321 164L346 164L340.500 165.500Z" fill="#e3dfe6"/>
<path d="M319 166.500L340.500 165L346 234.500L324.800 232Z" fill="#d4cdd7" stroke="#c6c1c9" stroke-width=".7"/>
<path d="M322.500 171.500L337.500 170.500L342.500 229L328 227.500Z" fill="none" stroke="#c8c3cb" stroke-width=".9"/>
<circle cx="333.500" cy="219.500" r="5.500" fill="#cfc8d2" stroke="#aaa5ad" stroke-width="1.300"/><circle cx="334" cy="220" r="3" fill="none" stroke="#b8b3bb" stroke-width="1"/>
<path d="M324.800 232L346 234.500L353.500 235.800" stroke="#ece9ee" stroke-width="1.200" fill="none"/>
<!-- right latch -->
<path d="M649.300 197L650.500 188.200L655.500 194.500L648 283.300L643 279.500Z" fill="#aca7af"/>
<path d="M603 189.500L608 184.500L618 185L615.500 192L634.300 194.500L639.300 187.500L650.500 188.200L649.300 197L643 279.500L600.500 273.300Z" fill="#d4cdd7" stroke="#bcb7bf" stroke-width=".8"/>
<path d="M603 189.500L608 184.500L618 185L615.500 192L613.500 193.500L611 188.500ZM634.300 194.500L639.300 187.500L650.500 188.200L649.300 192L641 191.500L637.500 196Z" fill="#e6e2e9"/>
<path d="M604.300 207L600.500 272L636.800 279" stroke="#b5b0b8" stroke-width="1.300" fill="none"/>
<path d="M610.500 215.800L639.300 219" stroke="#bdb8c0" stroke-width="2.200"/>
<path d="M616.300 232L624.300 224.500L624.300 239.500Z" fill="#e0dbe3"/><path d="M632.300 232L624.300 224.500L624.300 239.500Z" fill="#9e9aaa"/>
<!-- hole -->
<circle cx="539" cy="193" r="3.500" fill="none" stroke="#c2bdc5" stroke-width="1"/>
<!-- right slab bracket -->
<path d="M755.500 350.800L781.800 354.500L760.500 477L755.500 501.500" stroke="#c0bbc3" stroke-width="4" fill="none"/>
<circle cx="785" cy="532" r="2.200" fill="#8c8790"/><circle cx="791" cy="489" r="2" fill="#dedae1"/>
<circle cx="593" cy="576" r="3" fill="none" stroke="#bdb8c0" stroke-width="1"/>
<!-- slab left dots -->
<circle cx="263" cy="238" r=".9" fill="#aaa5ad"/><circle cx="268" cy="272" r=".9" fill="#aaa5ad"/><circle cx="273" cy="306" r=".9" fill="#aaa5ad"/><circle cx="278" cy="340" r=".9" fill="#aaa5ad"/><circle cx="283" cy="370" r=".9" fill="#aaa5ad"/>
</g>
<path d="M592.500 278.500L640 287.500" stroke="#f3f1f5" stroke-width="2.400" stroke-linecap="round" fill="none"/>
<!--GIZMO-->
<g id="gizmo">
<path d="M483 246V150" stroke="url(#gBlue)" stroke-width="1.200"/>
<path d="M482.300 141.500L484.200 151H480.600Z" fill="#3535ee"/>
<path d="M490.500 245.800L531 230.500" stroke="url(#gGreen)" stroke-width="1.200"/>
<path d="M535 229L528.200 229.400L529.800 233Z" fill="#35c935"/>
<path d="M493 250.800L572 263" stroke="url(#gRed)" stroke-width="1.300"/>
<path d="M578 264L570.300 261L569.800 265.200Z" fill="#ee2c2c"/>
<circle cx="483.800" cy="249.500" r="5.800" fill="#fff"/>
<ellipse cx="522" cy="164.500" rx="3" ry="5" fill="#9ff3f6"/>
<ellipse cx="552.300" cy="179" rx="5.200" ry="5.600" fill="#f8a0ef"/>
<ellipse cx="583.800" cy="243.300" rx="5" ry="1.800" fill="#e9e97c"/>
<circle cx="795" cy="594.500" r="3" fill="#7ed321"/><circle cx="795" cy="594.500" r="3.600" fill="none" stroke="#b5c9a0" stroke-width=".8"/>
</g>
</svg>
<!--VOVER-->
<svg class="a" style="left:4px;top:4.500px" width="12" height="9" viewBox="0 0 12 9"><rect x=".5" y=".5" width="11" height="8" fill="#dcd7df" stroke="#c0bbc3" stroke-width=".6"/><rect x="1.500" y="2.500" width="9" height="4" fill="#2a2a2a"/><circle cx="6" cy="4.500" r="1.500" fill="#dcd7df"/></svg>
<div class="dd" style="left:17.500px;top:4px;width:88.300px;height:12px;box-shadow:0 0 0 1px #333"></div>
<span class="t" style="left:20.500px;top:3.800px">Main Camera</span>
<div class="dd" style="left:109.500px;top:4px;width:88px;height:12px;box-shadow:0 0 0 1px #333"></div>
<span class="t" style="left:112.500px;top:3.800px">Full Quality</span>
<svg class="a" style="left:533px;top:2px" width="54" height="13" viewBox="749 74 54 13"><g fill="none" stroke="#c3bdc6" stroke-width="1.300"><circle cx="756" cy="80.300" r="3.300" stroke-width="3" stroke-dasharray="1.800 .8"/><circle cx="756" cy="80.300" r="3.600" stroke-width="1.600"/><path d="M769.500 75v11" stroke-width="1.600"/><path d="M763.500 80.300l4-3.200v6.400zM775.500 80.300l-4-3.200v6.400z" fill="#c3bdc6" stroke="none"/><rect x="778.500" y="75.500" width="9.500" height="9.500" stroke="#cdc7d0" stroke-width="1"/><rect x="780.500" y="77.500" width="5.500" height="5.500" fill="#d6d0d9" stroke="none"/></g><rect x="791" y="75" width="10" height="10.500" fill="#b6b1b9"/><path d="M793 84l6-7M792 80l3-3.500M797 85l3.500-4" stroke="#d0cad3" stroke-width="1.400"/></svg>

</div>
<!--RIGHT-->
<div id="right" class="a">
<div class="a" style="left:0;top:0;width:217px;height:18px;background:#242424"></div>
<div class="ptab on" style="left:0;width:50px"></div><div class="ptab" style="left:51.500px;width:38.500px"></div>
<span class="t" style="left:7.5px;top:3.800px">Materials</span><span class="t" style="left:59px;top:3.800px">Layers</span>
<svg class="a" style="left:204px;top:4.500px" width="10" height="10" viewBox="0 0 10 10"><path d="M4.500 1.500H1v7.500h7.500V5.500" fill="none" stroke="#d0d0d0" stroke-width="1.300"/><path d="M5.200.3H9.700V4.800L8 3.100 4.800 6.300 3.700 5.200 6.900 2z" fill="#e6e6e6"/></svg>
<svg class="a" style="left:0;top:20px" width="217" height="15" viewBox="807 92 217 15">
<g fill="#dadada">
<circle cx="817" cy="99" r="5.200"/><path d="M817 95.800v6.400M813.800 99h6.400" stroke="#333" stroke-width="1.400"/>
<circle cx="835.500" cy="97.500" r="4" fill="#bdbdbd"/><circle cx="838.500" cy="100.500" r="4" stroke="#333" stroke-width=".8"/><path d="M838.500 98.300v4.400M836.300 100.500h4.400" stroke="#333" stroke-width="1"/>
<circle cx="857" cy="99" r="5.200"/>
<g fill="#333"><rect x="853" y="95.500" width="2" height="2"/><rect x="857" y="95.500" width="2" height="2"/><rect x="855" y="97.500" width="2" height="2"/><rect x="859" y="97.500" width="2" height="2"/><rect x="853" y="99.500" width="2" height="2"/><rect x="857" y="99.500" width="2" height="2"/><rect x="855" y="101.500" width="2" height="2"/><rect x="859" y="101.500" width="2" height="2"/><rect x="851.800" y="97.500" width="1.200" height="2"/></g>
<path d="M871.300 94.500h4l1 1.300h5.500v7.800h-10.500z"/>
<path d="M891.300 95.300h10v1.300h-10z M894.300 94h4v1h-4z M892.100 97.300h8.400l-.5 7h-7.400z"/><path d="M894.600 98.200v5.200M896.300 98.200v5.200M898 98.200v5.200" stroke="#333" stroke-width=".7"/>
<path d="M912.500 94l-1 2.500 2.500 1.500-1.500 1.500" stroke="#dadada" stroke-width="1.200" fill="none"/><path d="M917.500 97.500l3.500 1.500v3.800l-3.500 1.700-3.500-1.700v-3.800z" fill="#bdbdbd"/><path d="M917.500 100.600l3.500-1.600v3.800l-3.500 1.700z" fill="#8e8e8e"/>
<circle cx="936.300" cy="99" r="5.200"/><path d="M939.300 96L934.500 100.800M934 97.800v3.500h3.500" stroke="#333" stroke-width="1.400" fill="none"/>
<circle cx="956" cy="99" r="5.200"/><path d="M953 102L957.800 97.200M954.800 96.700h3.500v3.500" stroke="#333" stroke-width="1.400" fill="none"/>
</g></svg>
<div class="a" style="left:161px;top:20px;width:53.500px;height:13.500px;background:#292929"></div>
<div class="a" style="left:193px;top:21px;width:4.500px;height:11.500px;background:#555"></div>
<span class="t" style="left:178.5px;top:21px;color:#c8c8c8">- / +</span>
<div class="a" style="left:1px;top:36.5px;width:205.500px;height:233px;border:1px solid #2a2a2a;box-sizing:border-box"></div>
<div class="a" style="left:4.0px;top:39.6px;width:61px;height:61px;background:#1b1b1b"></div>
<div class="a" style="left:4.0px;top:100.6px;width:61px;height:13.300px;background:#4a4a4a"></div>
<svg class="a" style="left:4.0px;top:39.6px" width="61" height="61" viewBox="0 0 61 61"><circle cx="30.900" cy="30.500" r="25.700" fill="url(#gT)"/><use href="#texd"/></svg>
<span class="t" style="left:5.5px;top:101.4px">Default</span>
<div class="a" style="left:68.2px;top:39.6px;width:61px;height:61px;background:#1b1b1b"></div>
<div class="a" style="left:68.2px;top:100.6px;width:61px;height:13.300px;background:#4a4a4a"></div>
<svg class="a" style="left:68.2px;top:39.6px" width="61" height="61" viewBox="0 0 61 61"><circle cx="30.900" cy="30.500" r="25.700" fill="url(#gS)"/><ellipse cx="39.500" cy="19.500" rx="3" ry="2.600" fill="#fff" filter="url(#bl)"/></svg>
<span class="t" style="left:69.7px;top:101.4px">Default_high</span>
<div class="a" style="left:132.3px;top:39.6px;width:61px;height:61px;background:#1b1b1b"></div>
<div class="a" style="left:132.3px;top:100.6px;width:61px;height:13.300px;background:#4a4a4a"></div>
<svg class="a" style="left:132.3px;top:39.6px" width="61" height="61" viewBox="0 0 61 61"><circle cx="30.900" cy="30.500" r="25.700" fill="url(#gS)"/><ellipse cx="39.500" cy="19.500" rx="3" ry="2.600" fill="#fff" filter="url(#bl)"/></svg>
<span class="t" style="left:133.8px;top:101.4px">Glass</span>
<div class="a" style="left:4.0px;top:116.2px;width:61px;height:61px;background:#1b1b1b"></div>
<div class="a" style="left:4.0px;top:177.2px;width:61px;height:13.300px;background:#4a4a4a"></div>
<svg class="a" style="left:4.0px;top:116.2px" width="61" height="61" viewBox="0 0 61 61"><circle cx="30.900" cy="30.500" r="25.700" fill="url(#gT)"/><use href="#texd"/></svg>
<span class="t" style="left:5.5px;top:178.0px">UV</span>
<div class="a" style="left:68.2px;top:116.2px;width:61px;height:61px;background:#1b1b1b"></div>
<div class="a" style="left:68.2px;top:177.2px;width:61px;height:13.300px;background:#4a4a4a"></div>
<svg class="a" style="left:68.2px;top:116.2px" width="61" height="61" viewBox="0 0 61 61"><circle cx="30.900" cy="30.500" r="25.700" fill="url(#gS)"/><ellipse cx="39.500" cy="19.500" rx="3" ry="2.600" fill="#fff" filter="url(#bl)"/></svg>
<span class="t" style="left:69.7px;top:178.0px">UV_high</span>
<div class="a" style="left:206.5px;top:37.5px;width:7.500px;height:232px;background:#2a2a2a"></div>
<div class="a" style="left:207px;top:38.3px;width:6.500px;height:6.800px;background:#484848"></div><div class="a" style="left:207px;top:261.5px;width:6.500px;height:7.300px;background:#484848"></div>
<svg class="a" style="left:207px;top:38.3px" width="7" height="7" viewBox="0 0 7 7"><path d="M1 5L3.300 2 5.600 5z" fill="#2a2a2a"/></svg><svg class="a" style="left:207px;top:262px" width="7" height="7" viewBox="0 0 7 7"><path d="M1 2L3.300 5 5.600 2z" fill="#2a2a2a"/></svg>
<div class="a" style="left:0;top:272px;width:217px;height:3px;background:#242424"></div>
<div class="a" style="left:1px;top:277.5px;width:205.500px;height:252px;border:1px solid #2a2a2a;box-sizing:border-box"></div>
<span class="t" style="left:79px;top:291.5px;color:#6c6c6c">No Selection</span>
<div class="a" style="left:206.5px;top:278px;width:7.500px;height:251.500px;background:#2a2a2a"></div>
<div class="a" style="left:207px;top:278.8px;width:6.500px;height:7px;background:#484848"></div><div class="a" style="left:207px;top:521.5px;width:6.500px;height:7.300px;background:#484848"></div>
<svg class="a" style="left:207px;top:278.8px" width="7" height="7" viewBox="0 0 7 7"><path d="M1 5L3.300 2 5.600 5z" fill="#2a2a2a"/></svg><svg class="a" style="left:207px;top:522px" width="7" height="7" viewBox="0 0 7 7"><path d="M1 2L3.300 5 5.600 2z" fill="#2a2a2a"/></svg>
</div>
<div class="a" style="left:213px;top:326px;width:2.500px;height:24px;background:#585858"></div><div class="a" style="left:804px;top:327px;width:2.500px;height:23px;background:#585858"></div>
<!--STATUS-->
<div id="status" class="a">
<svg class="a" style="left:2px;top:2.500px" width="12" height="13" viewBox="0 0 12 13"><path d="M1 3.300h10M1 5.600h10M1 7.900h10" stroke="#cfcfcf" stroke-width="1.100"/><path d="M.5 10l2 1.300-2 1.300M3.500 12.600h2.500" stroke="#cfcfcf" stroke-width=".8" fill="none"/></svg>
<span class="t" style="left:909px;top:3.700px">Autosave in 1:15</span>
<span class="t" style="left:978px;top:3.700px">VRAM: 6%</span>
</div>
</body></html>
